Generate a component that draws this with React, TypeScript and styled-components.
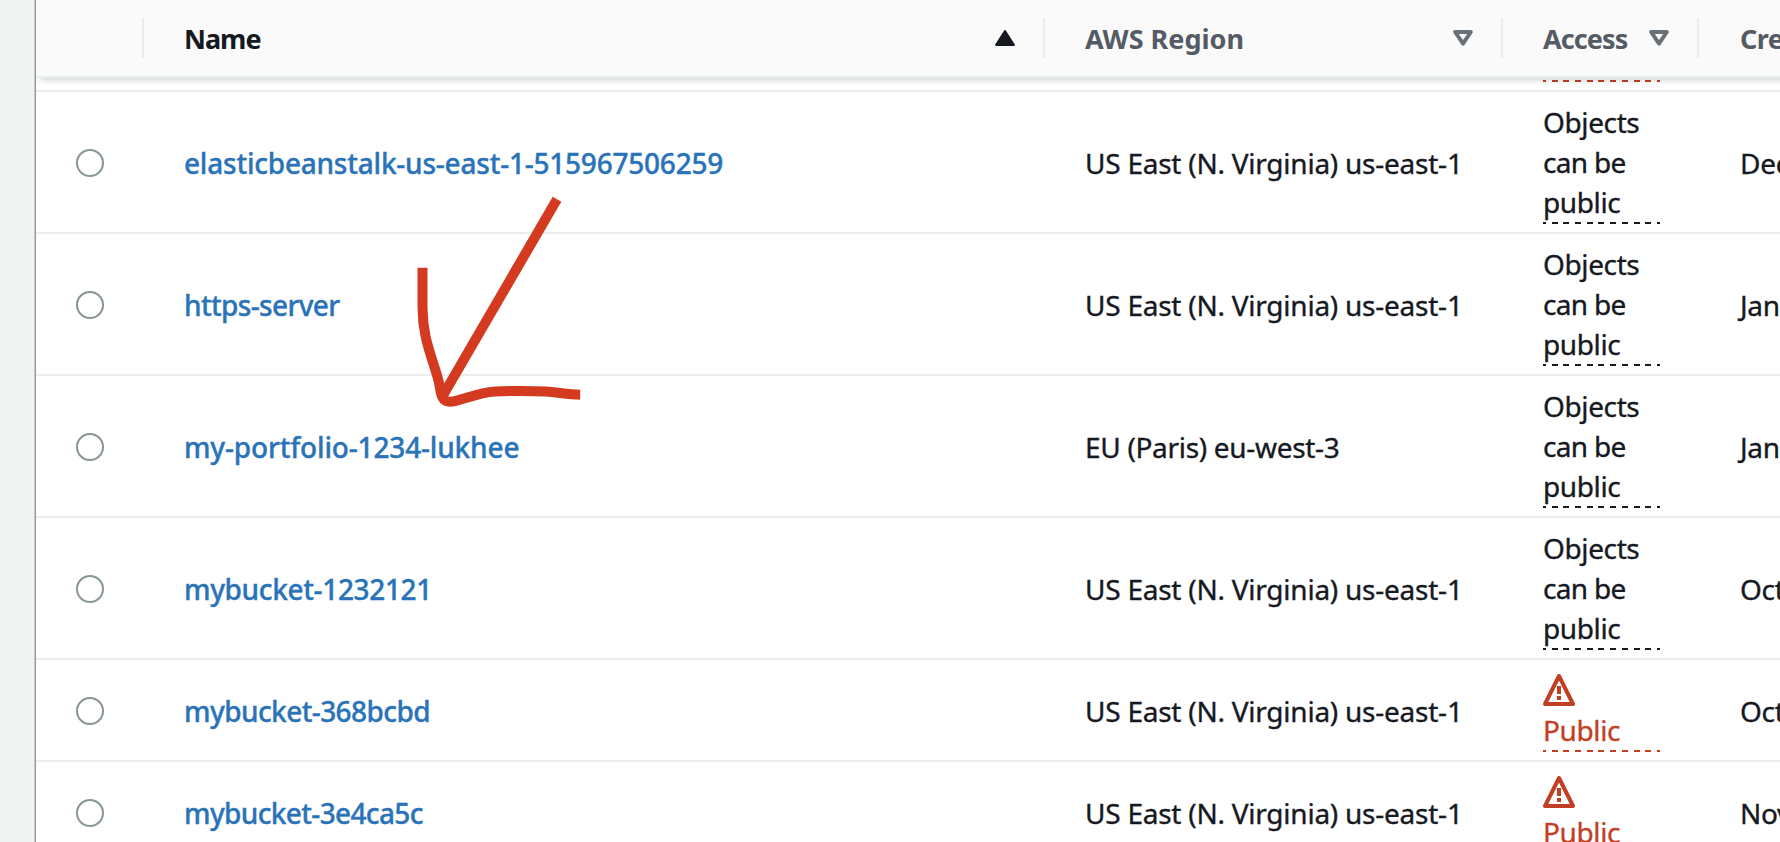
import React from 'react';
import styled, { createGlobalStyle } from 'styled-components';

const GlobalStyle = createGlobalStyle`
  * { box-sizing: border-box; }
  body {
    margin: 0;
    overflow: hidden;
    background: #f2f3f3;
    color: #16191f;
    font-family: 'Noto Sans', 'Open Sans', sans-serif;
    font-size: 28px;
    line-height: 40px;
  }
`;

const COLUMNS = '108px 901px 458px 196px 400px';

const Page = styled.div`
  position: relative;
  display: flex;
  width: 1780px;
  height: 842px;
  padding-left: 34px;
  overflow: hidden;
`;

const Panel = styled.main`
  flex: 1;
  min-width: 0;
  overflow: hidden;
  background: #fff;
  border-left: 1px solid #c6caca;
  box-shadow: inset 1px 0 0 #8f999b;
  padding-left: 1px;
`;

const HeaderRow = styled.div`
  position: relative;
  z-index: 1;
  display: grid;
  grid-template-columns: ${COLUMNS};
  width: max-content;
  height: 78px;
  background: #fafafa;
  border-bottom: 2px solid #eaeded;
  box-shadow: 4px 2px 6px rgba(0, 28, 36, 0.2);
`;

const HeaderCell = styled.div<{ $active?: boolean; $spacing?: number }>`
  display: flex;
  align-items: center;
  justify-content: space-between;
  padding: 0 28px 0 40px;
  border-right: 2px solid;
  border-image: linear-gradient(transparent 19px, #eaeded 19px, #eaeded 57px, transparent 57px) 1;
  color: ${p => (p.$active ? '#16191f' : '#545b64')};
  font-size: 27px;
  font-weight: 700;
  letter-spacing: ${p => p.$spacing ?? 0}px;
  white-space: nowrap;

  &:last-child {
    padding-left: 41px;
  }
`;

const HeaderLabel = styled.span`
  padding-top: 2px;
`;

const Row = styled.div`
  display: grid;
  grid-template-columns: ${COLUMNS};
  width: max-content;
  align-items: center;
  padding: 10px 0 8px;
  border-bottom: 2px solid #eaeded;
  -webkit-text-stroke: 0.35px currentColor;
`;

const PartialRow = styled(Row)`
  padding-top: 2px;
`;

const Cell = styled.div<{ $spacing?: number }>`
  padding-left: 40px;
  letter-spacing: ${p => p.$spacing ?? 0}px;
  white-space: nowrap;

  &:last-child {
    padding-left: 41px;
  }
`;

const AccessCell = styled.div`
  padding: 0 39px 0 40px;
`;

const RadioCell = styled.div`
  display: flex;
  justify-content: center;
`;

const Radio = styled.span`
  width: 28px;
  height: 28px;
  border: 2px solid #879596;
  border-radius: 50%;
  background: #fff;
`;

const BucketLink = styled.a`
  color: #2a73b8;
  font-weight: 500;
  text-decoration: none;
`;

const Access = styled.div<{ $alert?: boolean }>`
  display: flex;
  flex-direction: column;
  color: ${p => (p.$alert ? '#c33f24' : '#16191f')};

  &::after {
    content: '';
    height: 2px;
    background: repeating-linear-gradient(
      90deg,
      currentColor 0 3px,
      transparent 3px 8.7px,
      currentColor 8.7px 11.7px
    );
  }
`;

const Line = styled.span<{ $spacing?: number }>`
  height: 40px;
  letter-spacing: ${p => p.$spacing ?? -0.38}px;
`;

const IconLine = styled.span`
  display: flex;
  align-items: center;
  height: 40px;
`;

const Annotation = styled.svg`
  position: absolute;
  left: 400px;
  top: 180px;
`;

const SortAscending = () => (
  <svg width="20" height="16" viewBox="0 0 20 16">
    <path d="M10 1.3 18.7 14.8H1.3Z" fill="#16191f" stroke="#16191f" strokeWidth="2.4" strokeLinejoin="round" />
  </svg>
);

const SortIdle = () => (
  <svg width="20" height="16" viewBox="0 0 20 16">
    <path d="M2.2 2H17.8L10 13.6Z" fill="none" stroke="#687078" strokeWidth="4" strokeLinejoin="round" />
  </svg>
);

const WarningIcon = () => (
  <svg width="32" height="32" viewBox="0 0 32 32">
    <path d="M16 2 30 30H2Z" fill="none" stroke="currentColor" strokeWidth="4" strokeLinejoin="round" />
    <path d="M14 12h4v8h-4zM14 22h4v4h-4z" fill="currentColor" />
  </svg>
);

type Bucket = {
  name: string;
  nameSpacing: number;
  region: string;
  regionSpacing: number;
  isPublic?: boolean;
  created: string;
};

const US_EAST = { region: 'US East (N. Virginia) us-east-1', regionSpacing: -0.24 };

const buckets: Bucket[] = [
  { name: 'elasticbeanstalk-us-east-1-515967506259', nameSpacing: -0.22, ...US_EAST, created: 'Dec' },
  { name: 'https-server', nameSpacing: -0.65, ...US_EAST, created: 'Jan' },
  { name: 'my-portfolio-1234-lukhee', nameSpacing: -0.16, region: 'EU (Paris) eu-west-3', regionSpacing: -0.31, created: 'Jan' },
  { name: 'mybucket-1232121', nameSpacing: -0.35, ...US_EAST, created: 'Oct' },
  { name: 'mybucket-368bcbd', nameSpacing: -0.58, ...US_EAST, isPublic: true, created: 'Oct' },
  { name: 'mybucket-3e4ca5c', nameSpacing: -0.64, ...US_EAST, isPublic: true, created: 'Nov' },
];

const AccessStatus = ({ isPublic }: { isPublic?: boolean }) =>
  isPublic ? (
    <Access $alert>
      <IconLine><WarningIcon /></IconLine>
      <Line>Public</Line>
    </Access>
  ) : (
    <Access>
      <Line>Objects</Line>
      <Line $spacing={-0.67}>can be</Line>
      <Line>public</Line>
    </Access>
  );

export default function App() {
  return (
    <>
      <GlobalStyle />
      <Page>
        <Panel>
          <HeaderRow>
            <HeaderCell />
            <HeaderCell $active $spacing={-1}><HeaderLabel>Name</HeaderLabel><SortAscending /></HeaderCell>
            <HeaderCell><HeaderLabel>AWS Region</HeaderLabel><SortIdle /></HeaderCell>
            <HeaderCell $spacing={-0.9}><HeaderLabel>Access</HeaderLabel><SortIdle /></HeaderCell>
            <HeaderCell $spacing={-0.6}><HeaderLabel>Cre</HeaderLabel></HeaderCell>
          </HeaderRow>
          <PartialRow>
            <span /><span /><span />
            <AccessCell><Access $alert /></AccessCell>
          </PartialRow>
          {buckets.map(b => (
            <Row key={b.name}>
              <RadioCell><Radio /></RadioCell>
              <Cell $spacing={b.nameSpacing}><BucketLink href="#">{b.name}</BucketLink></Cell>
              <Cell $spacing={b.regionSpacing}>{b.region}</Cell>
              <AccessCell><AccessStatus isPublic={b.isPublic} /></AccessCell>
              <Cell $spacing={-0.3}>{b.created}</Cell>
            </Row>
          ))}
        </Panel>
        <Annotation width="200" height="240" viewBox="400 180 200 240" fill="none" stroke="#d33a20" strokeWidth="10" strokeLinejoin="round">
          <path d="M557 199.3 443.2 395" />
          <path d="M422.5 267.7V307C422.5 337 431 354 437.5 377C441.5 389 439 401.8 450 401.8C460 401.8 476 392.5 495 391.5C512 390.7 530 390.7 546 391.5C558 392.3 568 394.6 580.2 394.7" />
        </Annotation>
      </Page>
    </>
  );
}
